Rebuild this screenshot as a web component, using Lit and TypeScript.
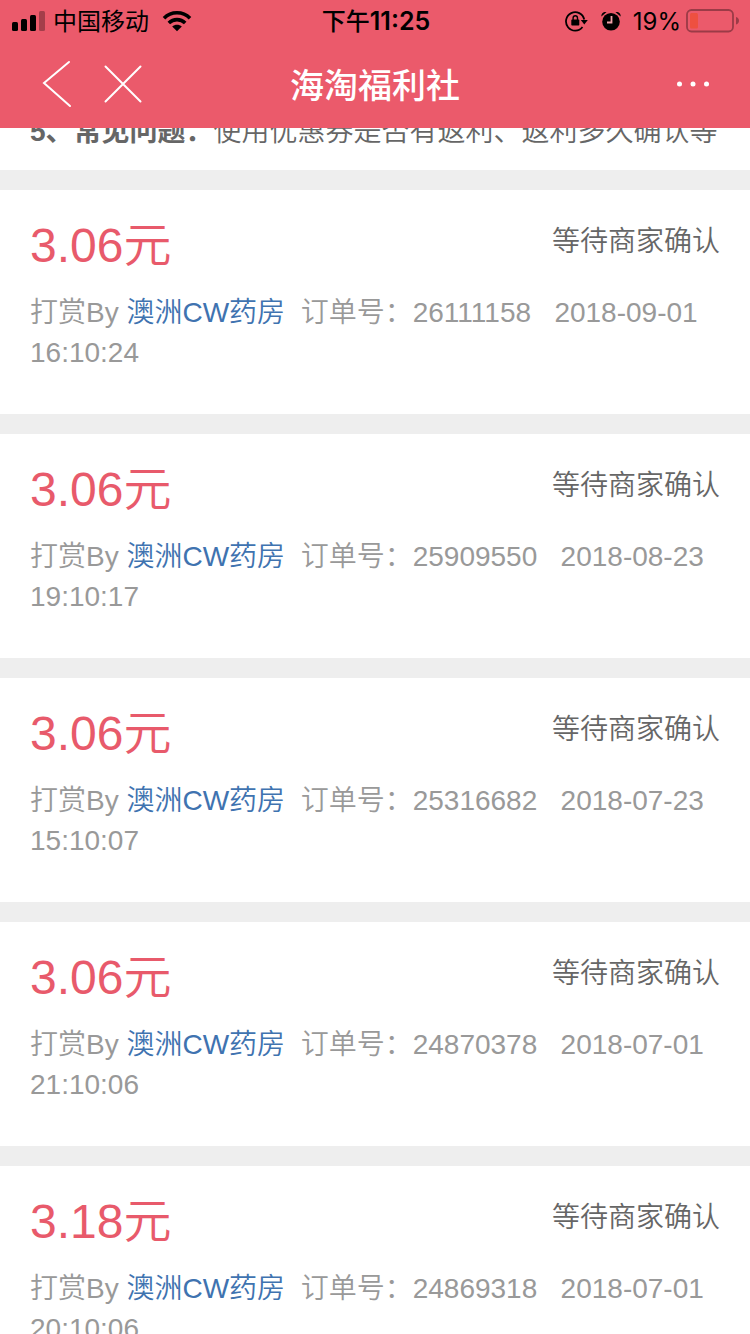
import { LitElement, html, css } from 'lit';
import { customElement, property } from 'lit/decorators.js';

interface Reward {
  amount: string;
  shop: string;
  order: string;
  date: string;
  time: string;
}

const REWARDS: Reward[] = [
  { amount: '3.06', shop: '澳洲CW药房', order: '26111158', date: '2018-09-01', time: '16:10:24' },
  { amount: '3.06', shop: '澳洲CW药房', order: '25909550', date: '2018-08-23', time: '19:10:17' },
  { amount: '3.06', shop: '澳洲CW药房', order: '25316682', date: '2018-07-23', time: '15:10:07' },
  { amount: '3.06', shop: '澳洲CW药房', order: '24870378', date: '2018-07-01', time: '21:10:06' },
  { amount: '3.18', shop: '澳洲CW药房', order: '24869318', date: '2018-07-01', time: '20:10:06' },
];

@customElement('status-bar')
class StatusBar extends LitElement {
  static styles = css`
    :host {
      display: grid;
      grid-template-columns: 1fr auto 1fr;
      align-items: center;
      height: 40px;
      padding: 0 10px 0 12px;
      color: #000;
      font: 400 24px/38px Inter, "Noto Sans CJK SC", sans-serif;
    }
    svg { display: block; flex: none; }
    .side { display: flex; align-items: center; }
    .carrier, .time, .level { padding-top: 2px; }
    .carrier { margin: 0 13px 0 7px; }
    .time { font-weight: 600; font-size: 25px; }
    .cn { font-weight: 500; font-size: 24px; }
    .end { justify-content: flex-end; }
    .alarm { margin: 0 12px; }
    .battery { margin-left: 5px; }
  `;

  render() {
    return html`
      <div class="side">
        <svg width="34" height="20" viewBox="0 0 34 20" aria-hidden="true">
          <rect x="0" y="11" width="6" height="9" rx="1.5"></rect>
          <rect x="9" y="8" width="6" height="12" rx="1.5"></rect>
          <rect x="18" y="4" width="6" height="16" rx="1.5"></rect>
          <rect x="27" y="0" width="6" height="20" rx="1.5" opacity=".3"></rect>
        </svg>
        <span class="carrier">中国移动</span>
        <svg width="30" height="22" viewBox="0 0 30 22" aria-hidden="true">
          <g fill="none" stroke="#000" stroke-width="3.6">
            <path d="M2 8.2C9.2 1 20.800 1 28 8.200"></path>
            <path d="M6.800 13C11.400 8.500 18.600 8.500 23.200 13"></path>
          </g>
          <path d="M15 21.200L10.200 16.600C12.900 14.100 17.100 14.100 19.800 16.600Z"></path>
        </svg>
      </div>
      <span class="time"><span class="cn">下午</span>11:25</span>
      <div class="side end">
        <svg width="24" height="22" viewBox="0 0 24 22" aria-hidden="true">
          <path d="M17.500 17A9.200 9.200 0 1 1 19.200 9.500" fill="none" stroke="#000" stroke-width="1.800"></path>
          <path d="M15.800 10H22.800L19.300 14.400Z"></path>
          <rect x="6.300" y="9.600" width="8" height="6" rx=".8"></rect>
          <path d="M8.100 10V8A2.200 2.200 0 0 1 12.500 8V10" fill="none" stroke="#000" stroke-width="1.400"></path>
        </svg>
        <svg class="alarm" width="20" height="20" viewBox="0 0 20 20" aria-hidden="true">
          <circle cx="10" cy="10.800" r="8.800"></circle>
          <path d="M10.500 5V11.500H6" fill="none" stroke="#f0a0a8" stroke-width="1.800"></path>
          <path d="M.4 5.600C0 2.600 2.400 .4 5.600 1Z"></path>
          <path d="M19.600 5.600C20 2.600 17.600 .4 14.400 1Z"></path>
        </svg>
        <span class="level">19%</span>
        <svg class="battery" width="54" height="24" viewBox="0 0 54 24" aria-hidden="true">
          <rect x="1" y="1" width="46" height="21.500" rx="4.500" fill="none" stroke="#9b3b47" stroke-width="1.800"></rect>
          <rect x="4" y="4" width="8" height="15.500" rx="1.500" fill="#ee5040"></rect>
          <path d="M50 8C54 9 54 14.500 50 15.500Z" fill="#9b3b47"></path>
        </svg>
      </div>
    `;
  }
}

@customElement('reward-card')
class RewardCard extends LitElement {
  @property({ attribute: false }) reward!: Reward;

  static styles = css`
    :host { display: block; padding: 30px 30px 41px; background: #fff; }
    .top { display: flex; justify-content: space-between; align-items: flex-start; }
    .amount { color: #e85a6b; font-size: 48px; line-height: 52px; }
    .state { color: #666; line-height: 44px; }
    .meta { margin: 21px 0 0; color: #999; line-height: 40px; }
    a { color: #3f73b0; text-decoration: none; }
  `;

  render() {
    const r = this.reward;
    return html`
      <div class="top">
        <span class="amount">${r.amount}元</span>
        <span class="state">等待商家确认</span>
      </div>
      <p class="meta">打赏By <a href="#">${r.shop}</a>&nbsp; 订单号：${r.order}&nbsp;&nbsp; ${r.date} ${r.time}</p>
    `;
  }
}

@customElement('app-root')
class AppRoot extends LitElement {
  static styles = css`
    :host {
      display: flex;
      flex-direction: column;
      height: 100vh;
      overflow: hidden;
      background: #eee;
      font: 350 28px/40px "Liberation Sans", "Noto Sans CJK SC", sans-serif;
    }
    header { flex: none; background: #eb5a6b; color: #fff; }
    nav {
      display: grid;
      grid-template-columns: 1fr auto 1fr;
      align-items: center;
      height: 88px;
      padding: 0 34px;
    }
    h1 { margin: 0; font-size: 34px; line-height: 48px; font-weight: 500; font-family: "Noto Sans CJK SC", sans-serif; }
    .actions { display: flex; gap: 8px; }
    .more { justify-content: flex-end; }
    button { display: block; padding: 0; border: 0; background: none; color: inherit; }
    svg { display: block; fill: none; stroke: #fff; stroke-width: 2; stroke-linecap: round; }
    .dots { fill: #fff; stroke: none; }
    main { flex: 1; min-height: 0; overflow: hidden; }
    .notice { margin: -18px 0 0; padding: 2px 30px 18px; background: #fff; color: #666; }
    .notice strong { font-weight: 700; }
    .list { display: grid; gap: 20px; margin: 20px 0 0; padding: 0; list-style: none; }
  `;

  render() {
    return html`
      <header>
        <status-bar></status-bar>
        <nav>
          <div class="actions">
            <button aria-label="返回">
              <svg width="52" height="52" viewBox="0 0 52 52"><path d="M35 4L10 25L36 48"></path></svg>
            </button>
            <button aria-label="关闭">
              <svg width="52" height="52" viewBox="0 0 52 52"><path d="M11.500 8.500L46.500 43.500M46.500 8.500L11.500 43.500"></path></svg>
            </button>
          </div>
          <h1>海淘福利社</h1>
          <div class="actions more">
            <button aria-label="更多">
              <svg class="dots" width="44" height="44" viewBox="0 0 44 44">
                <circle cx="7.500" cy="22" r="2.500"></circle>
                <circle cx="21" cy="22" r="2.500"></circle>
                <circle cx="34.500" cy="22" r="2.500"></circle>
              </svg>
            </button>
          </div>
        </nav>
      </header>
      <main>
        <p class="notice"><strong>5、常见问题：</strong>使用优惠券是否有返利、返利多久确认等</p>
        <ul class="list">
          ${REWARDS.map((r) => html`<li><reward-card .reward=${r}></reward-card></li>`)}
        </ul>
      </main>
    `;
  }
}
